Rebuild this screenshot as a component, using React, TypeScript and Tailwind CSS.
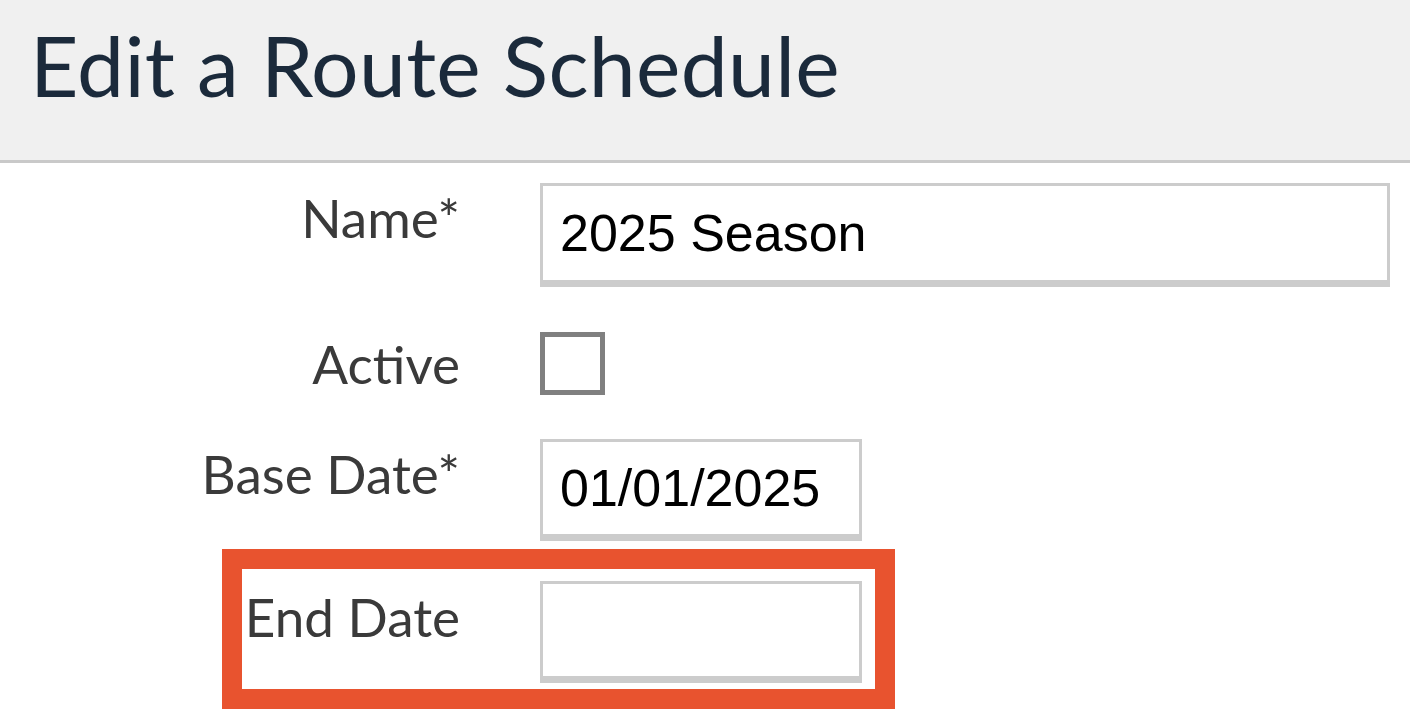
const labelFont = { fontFamily: "Lato, 'Noto Sans', sans-serif" };

function Label({ text, pad }: { text: string; pad: string }) {
  return (
    <div
      className={`text-right text-[53px] leading-[64px] text-[#3a3a3a] ${pad}`}
      style={labelFont}
    >
      {text}
    </div>
  );
}

function TextBox({ value, wide }: { value?: string; wide?: boolean }) {
  return (
    <div
      className={`flex items-center border-[3px] border-b-[7px] border-[#cccccc] bg-white pl-[17px] font-['Liberation_Sans',Arial,sans-serif] text-[52px] text-black ${
        wide ? "h-[104px] w-[850px]" : "h-[102px] w-[322px]"
      }`}
    >
      {value}
    </div>
  );
}

export default function App() {
  return (
    <div className="h-[714px] w-[1410px] overflow-hidden bg-white">
      {/* Header */}
      <div className="h-[163px] border-b-[3px] border-[#c9c9c9] bg-[#f0f0f0] pl-[30px] pt-[12px]">
        <h1
          className="text-[84px] font-normal leading-[106px] tracking-[0.3px] text-[#1b2a3b]"
          style={labelFont}
        >
          Edit a Route Schedule
        </h1>
      </div>

      {/* Form */}
      <div className="flex flex-col pt-[20px]">
        <div className="flex">
          <div className="w-[460px]">
            <Label text="Name*" pad="pt-[3px]" />
          </div>
          <div className="ml-[80px]">
            <TextBox value="2025 Season" wide />
          </div>
        </div>

        <div className="mt-[45px] flex">
          <div className="w-[460px]">
            <Label text="Active" pad="pt-0" />
          </div>
          <div className="ml-[80px]">
            <div className="h-[63px] w-[65px] border-[5px] border-[#808080] bg-white" />
          </div>
        </div>

        <div className="mt-[43px] flex">
          <div className="w-[460px]">
            <Label text="Base Date*" pad="pt-[3px]" />
          </div>
          <div className="ml-[80px]">
            <TextBox value="01/01/2025" />
          </div>
        </div>

        {/* Highlighted row */}
        <div className="ml-[222px] mt-[8px] flex w-[673px] border-[20px] border-[#e8532f] pb-[6px] pt-[12px]">
          <div className="w-[218px]">
            <Label text="End Date" pad="pt-[4px]" />
          </div>
          <div className="ml-[80px]">
            <TextBox />
          </div>
        </div>
      </div>
    </div>
  );
}
